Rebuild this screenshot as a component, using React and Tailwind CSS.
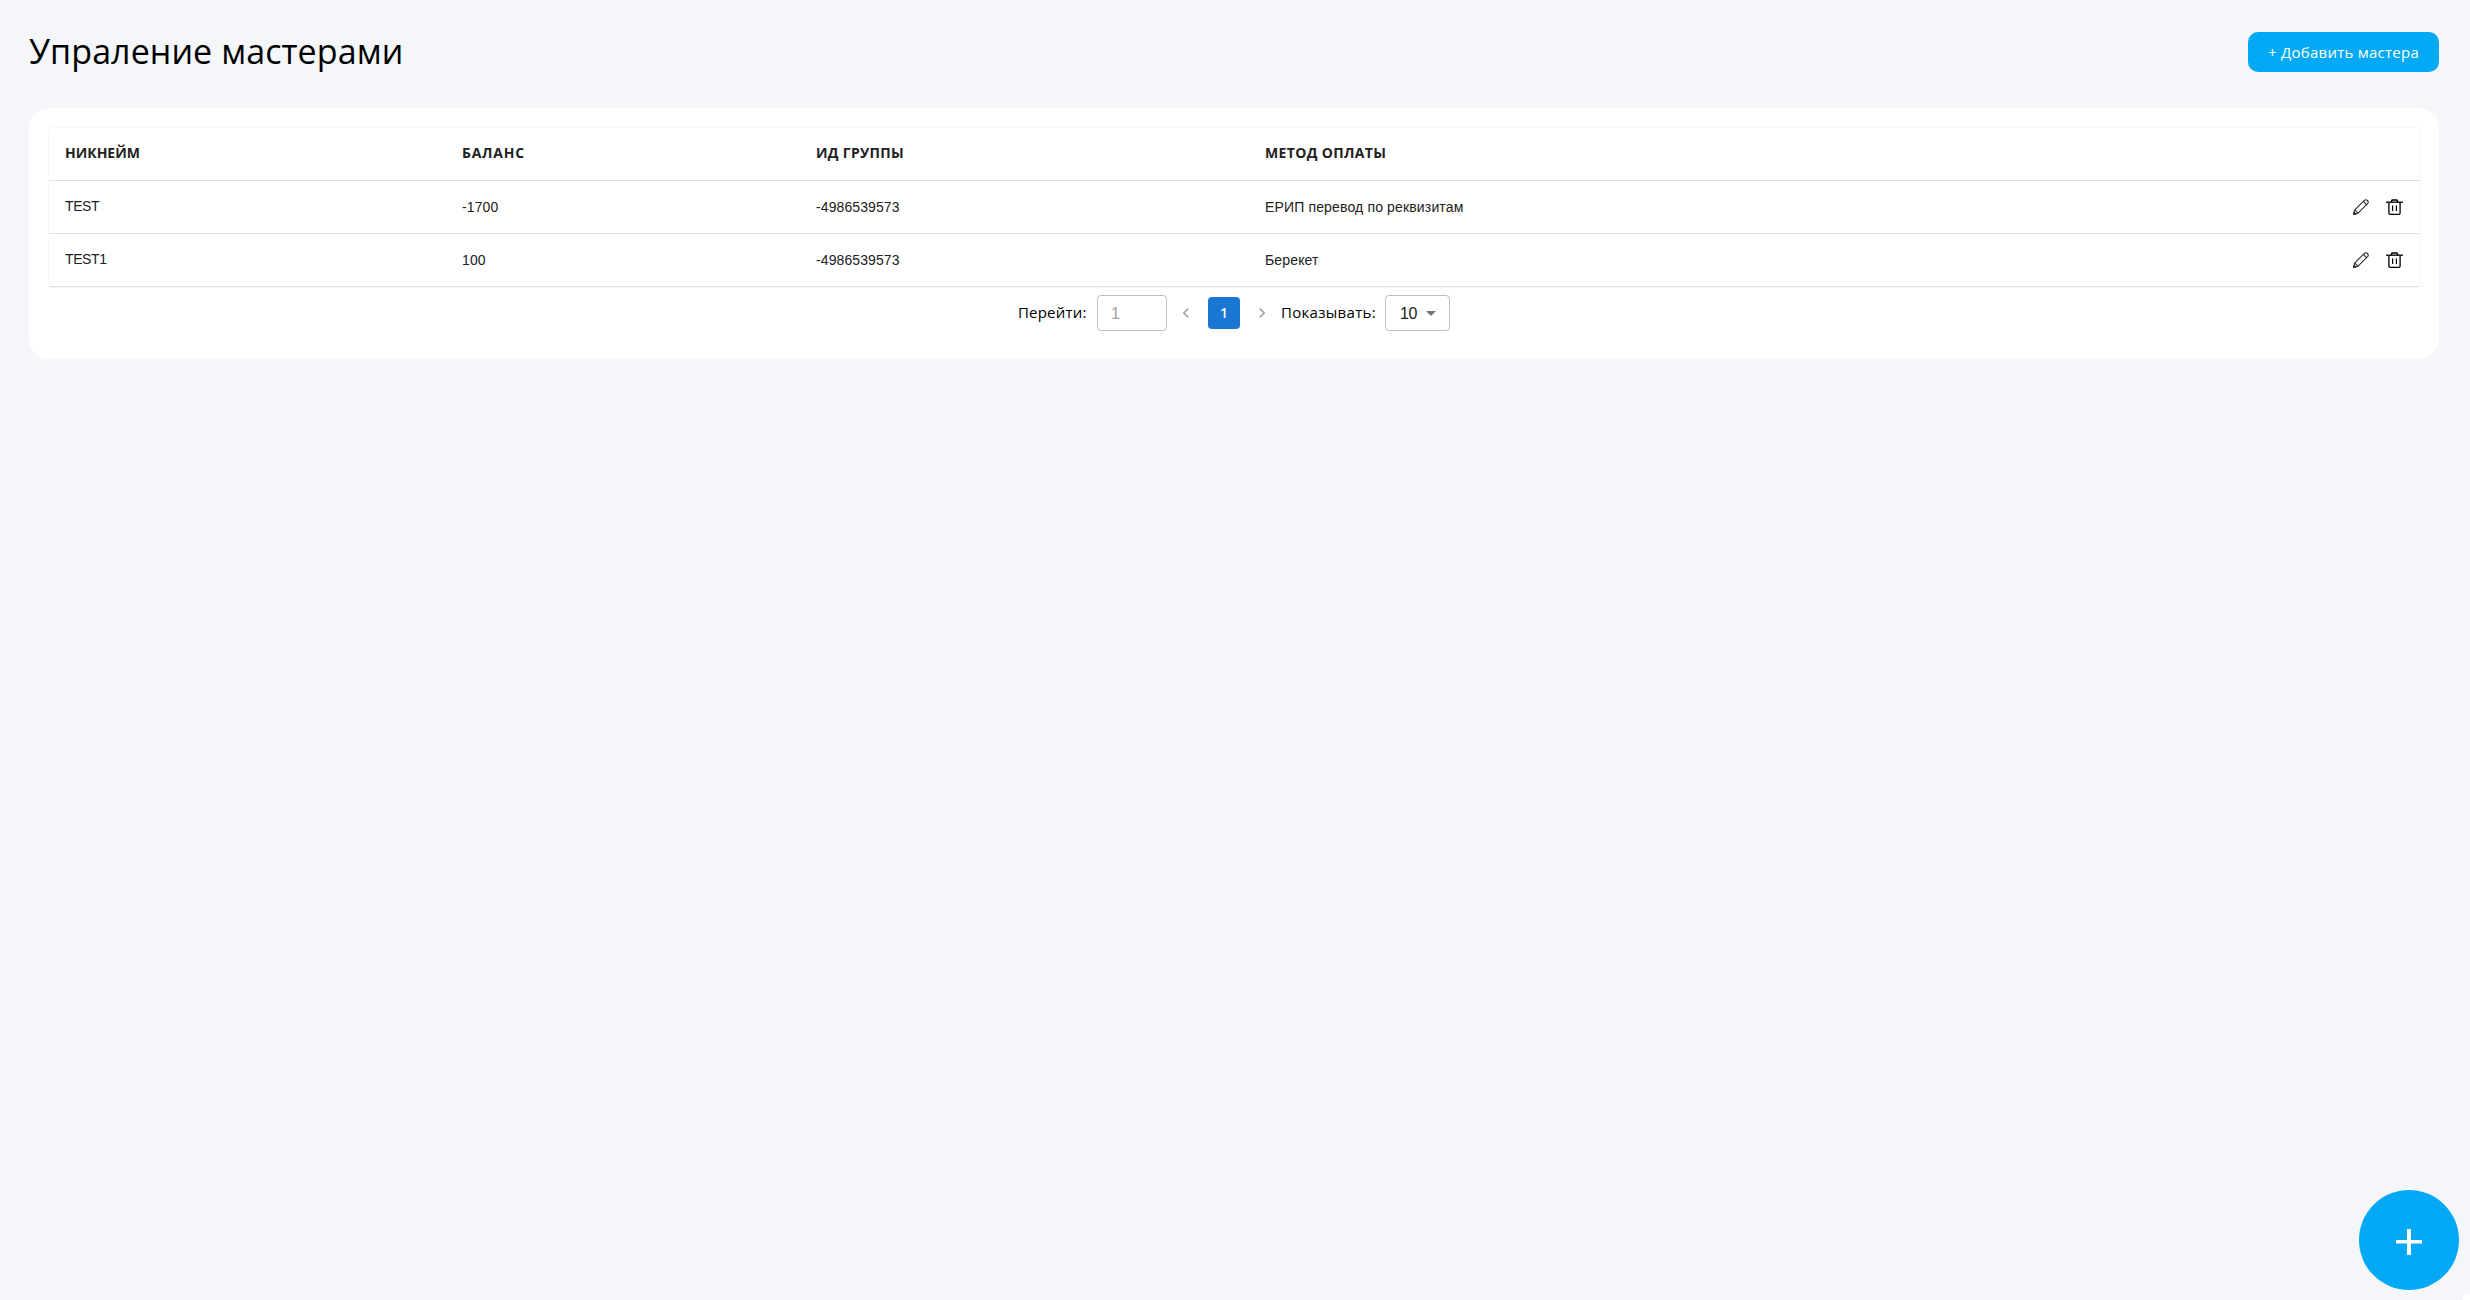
import React from "react";

const rows = [
  { name: "TEST", balance: "-1700", group: "-4986539573", method: "ЕРИП перевод по реквизитам" },
  { name: "TEST1", balance: "100", group: "-4986539573", method: "Берекет" },
];

const columns =
  "grid grid-cols-[397px_353px_450px_1fr] items-center border-b border-[#e0e0e0] px-4 h-[53px]";

function Pencil() {
  return (
    <svg className="size-4" viewBox="0 0 16 16" fill="none" stroke="#2b2d31" strokeWidth="1.1" strokeLinejoin="round" strokeLinecap="round">
      <path d="M0.7 15.3 L1.6 11.2 L11.6 1.2 Q13 0.1 14.4 1.5 Q15.9 3 14.8 4.4 L4.8 14.4 Z" />
      <path d="M10.4 2.4 L13.6 5.6 M1.6 11.2 Q3.8 11.9 4.8 14.4" />
      <path d="M0.6 15.4 L1.1 13.2 L2.8 14.9 Z" fill="#2b2d31" />
    </svg>
  );
}

function Trash() {
  return (
    <svg className="h-4 w-[17px]" viewBox="0 0 17 16" fill="none" stroke="#000" strokeWidth="1.3" strokeLinejoin="round">
      <path d="M0 3.2 H17" />
      <path d="M5.2 3 L6 1 H11 L11.8 3" strokeWidth="1.5" />
      <path d="M2.9 3.4 V14 Q2.9 15.3 4.2 15.3 H12.8 Q14.1 15.3 14.1 14 V3.4" />
      <path d="M6.6 6.4 V12 M10.4 6.4 V12" strokeWidth="1.2" />
    </svg>
  );
}

function Chevron({ d }) {
  return (
    <button className="mx-[3px] flex size-8 items-center justify-center">
      <svg className="size-5" viewBox="0 0 24 24" fill="#a6a6a6">
        <path d={d} />
      </svg>
    </button>
  );
}

export default function App() {
  return (
    <div className="min-h-[1300px] bg-[#f4f6fa] pl-[29px] pr-[31px] font-['Open_Sans',sans-serif] text-[#212121]">
      <header className="flex h-[108px] items-start justify-between">
        <h1 className="mt-[26px] text-[34px] leading-[50px] tracking-[0.08px] text-black">Упраление мастерами</h1>
        <button className="mt-8 h-10 w-[191px] rounded-[10px] bg-[#03a9f4] pb-0.5 pt-0.5 text-[15px] leading-6 tracking-[0.25px] whitespace-nowrap text-white">
          + Добавить мастера
        </button>
      </header>

      <main className="h-[251px] rounded-[20px] bg-white p-5">
        <section className="rounded-[4px] shadow-[0_0_2px_rgba(0,0,0,0.12)]">
          <div className={columns + " pb-[3px] text-[14px] font-bold"}>
            <span>НИКНЕЙМ</span>
            <span className="tracking-[0.75px]">БАЛАНС</span>
            <span className="pl-px tracking-[0.3px]">ИД ГРУППЫ</span>
            <span className="tracking-[0.35px]">МЕТОД ОПЛАТЫ</span>
          </div>
          {rows.map((r) => (
            <div key={r.name} className={columns + " font-['Liberation_Sans',sans-serif] text-[14px]"}>
              <span className="pb-0.5 tracking-[-0.4px]">{r.name}</span>
              <span className="tracking-[0.1px]">{r.balance}</span>
              <span className="pl-px tracking-[0.1px]">{r.group}</span>
              <div className="flex items-center justify-between">
                <span className="tracking-[0.15px]">{r.method}</span>
                <span className="flex gap-[17px]">
                  <Pencil />
                  <Trash />
                </span>
              </div>
            </div>
          ))}
        </section>

        <nav className="mt-2 flex h-9 items-center pl-[969px] text-[15px] text-black">
          <span className="w-[79px] pb-px tracking-[0.2px] whitespace-nowrap">Перейти:</span>
          <div className="flex h-9 w-[70px] items-center rounded-[4px] border border-[#bdbdbd] pl-[13px] font-['Liberation_Sans',sans-serif] text-[16px] text-[#a3a3a3]">
            <span className="pt-px">1</span>
          </div>
          <Chevron d="M15.41 7.41 14 6l-6 6 6 6 1.41-1.41L10.83 12z" />
          <button className="mx-[3px] size-8 rounded-[4px] bg-[#1976d2] pb-px text-[14px] font-semibold text-white">1</button>
          <Chevron d="M10 6 8.59 7.41 13.17 12l-4.58 4.59L10 18l6-6z" />
          <span className="w-[104px] pb-px tracking-[0.3px] whitespace-nowrap">Показывать:</span>
          <div className="flex h-9 w-[65px] items-center justify-between rounded-[4px] border border-[#bdbdbd] pl-[14px] pr-[6px] font-['Liberation_Sans',sans-serif] text-[16px] text-[#212121]">
            <span className="pt-px tracking-[-0.3px]">10</span>
            <svg className="size-6" viewBox="0 0 24 24" fill="#757575">
              <path d="M7 10l5 5 5-5z" />
            </svg>
          </div>
        </nav>
      </main>

      <button className="fixed right-[11px] bottom-[10px] flex size-[100px] items-center justify-center rounded-full bg-[#03a9f4]">
        <svg className="mt-1 size-[26px]" viewBox="0 0 26 26" fill="#fff">
          <path d="M11 0h4v11h11v3.5H15V26h-4V14.5H0V11h11z" />
        </svg>
      </button>
      <div className="fixed right-0 bottom-0 h-1.5 w-[7px] bg-white" />
    </div>
  );
}
